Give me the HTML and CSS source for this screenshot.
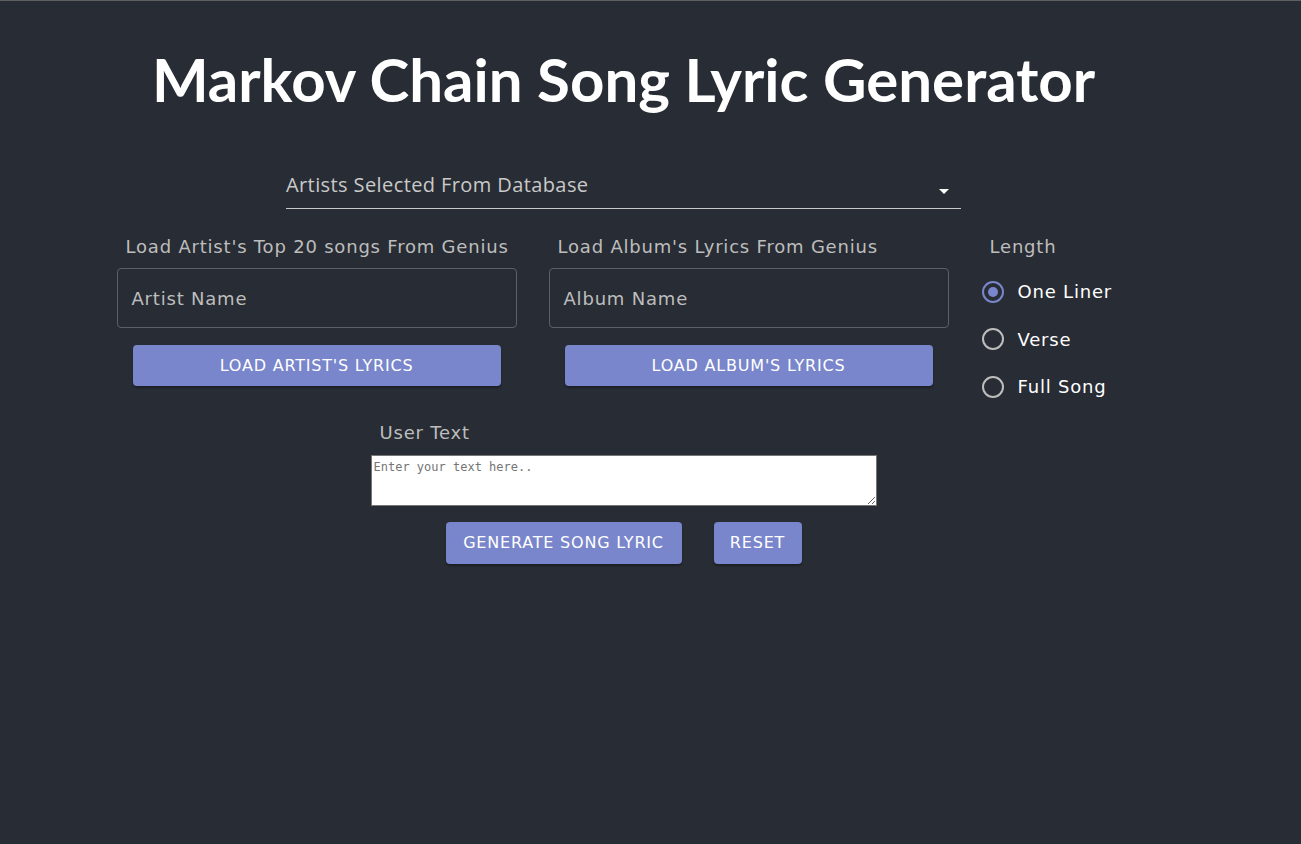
FILE: index.html
```html
<!DOCTYPE html>
<html>
<head>
<meta charset="utf-8">
<link rel="stylesheet" href="styles.css">
</head>
<body>
<div class="app">
  <h1 class="title">Markov Chain Song Lyric Generator</h1>
  <div class="select">
    <span class="select-label">Artists Selected From Database</span>
    <span class="caret"></span>
  </div>
  <div class="row">
    <div class="col">
      <div class="label">Load Artist's Top 20 songs From Genius</div>
      <div class="field">Artist Name</div>
      <button class="btn wide">LOAD ARTIST'S LYRICS</button>
    </div>
    <div class="col">
      <div class="label">Load Album's Lyrics From Genius</div>
      <div class="field">Album Name</div>
      <button class="btn wide">LOAD ALBUM'S LYRICS</button>
    </div>
    <div class="len">
      <div class="label len-label">Length</div>
      <div class="radio"><span class="dot on"></span>One Liner</div>
      <div class="radio"><span class="dot"></span>Verse</div>
      <div class="radio"><span class="dot"></span>Full Song</div>
    </div>
  </div>
  <div class="user">
    <div class="label user-label">User Text</div>
    <textarea class="ta" placeholder="Enter your text here.."></textarea>
    <div class="actions">
      <button class="btn gen">GENERATE SONG LYRIC</button>
      <button class="btn reset">RESET</button>
    </div>
  </div>
</div>
</body>
</html>
```

FILE: styles.css
```css
html, body { margin: 0; padding: 0; }
body {
  background: #282c34;
  border-top: 1px solid #5f5f5f;
  height: 843px;
  font-family: "DejaVu Sans", "Open Sans", sans-serif;
  color: #fff;
  overflow: hidden;
}
.app {
  width: 1247px;
  display: flex;
  flex-direction: column;
  align-items: center;
}
.title {
  margin: 38px 0 0 0;
  font-family: "Lato", "Open Sans", sans-serif;
  font-weight: 700;
  font-size: 60px;
  line-height: 80px;
  letter-spacing: 0;
}
.select {
  margin-top: 48px;
  width: 675px;
  height: 42px;
  border-bottom: 1px solid #c8c8c8;
  display: flex;
  align-items: flex-start;
  justify-content: space-between;
  box-sizing: border-box;
  padding-top: 6px;
}
.select-label {
  font-family: "Open Sans", sans-serif;
  font-size: 20px;
  color: #c9c9c9;
  line-height: 24px;
  letter-spacing: 0.4px;
}
.caret {
  width: 0; height: 0;
  border-left: 5px solid transparent;
  border-right: 5px solid transparent;
  border-top: 5px solid #fff;
  margin-right: 12px;
  margin-top: 16px;
}
.row {
  margin-top: 26px;
  display: flex;
  gap: 32px;
}
.col {
  width: 400px;
  display: flex;
  flex-direction: column;
}
.label {
  font-size: 18px;
  letter-spacing: 0.8px;
  color: #bdbdbd;
  padding-left: 9px;
  line-height: 24px;
  height: 24px;
  white-space: nowrap;
}
.field {
  margin-top: 9px;
  height: 60px;
  box-sizing: border-box;
  border: 1px solid #5c5f66;
  border-radius: 4px;
  padding-left: 14px;
  display: flex;
  align-items: center;
  font-size: 18px;
  letter-spacing: 0.8px;
  color: #bdbdbd;
}
.btn {
  background: #7986cb;
  border: none;
  border-radius: 4px;
  color: #fff;
  font-family: "DejaVu Sans", sans-serif;
  font-size: 16px;
  letter-spacing: 0.8px;
  height: 41px;
  box-shadow: 0 2px 2px rgba(0,0,0,0.3);
  padding: 0;
}
.wide {
  margin: 17px 16px 0 16px;
}
.len {
  width: 150px;
  display: flex;
  flex-direction: column;
}
.len-label { padding-left: 9px; }
.radio {
  display: flex;
  align-items: center;
  font-size: 18px;
  letter-spacing: 0.8px;
  color: #fff;
  height: 47.5px;
  gap: 14px;
  padding-left: 1px;
}
.len-label + .radio { margin-top: 9px; }
.dot {
  width: 22px;
  height: 22px;
  box-sizing: border-box;
  border: 2px solid #bdbdbd;
  border-radius: 50%;
  position: relative;
  flex: none;
}
.dot.on { border-color: #7986cb; }
.dot.on::after {
  content: "";
  position: absolute;
  left: 4px; top: 4px;
  width: 10px; height: 10px;
  border-radius: 50%;
  background: #7986cb;
}
.user {
  margin-top: 10px;
  width: 506px;
  display: flex;
  flex-direction: column;
}
.user-label { padding-left: 9px; }
.ta {
  margin-top: 10px;
  width: 506px;
  height: 51px;
  box-sizing: border-box;
  border: 1px solid #767676;
  background: #fff;
  font-family: "DejaVu Sans Mono", monospace;
  font-size: 12px;
  padding: 4px 2px 2px 2px;
  resize: both;
  display: block;
}
.ta::placeholder { color: #757575; }
.actions {
  margin-top: 16px;
  display: flex;
  justify-content: center;
  gap: 32px;
}
.gen { width: 236px; height: 42px; }
.reset { width: 88px; height: 42px; }
```
